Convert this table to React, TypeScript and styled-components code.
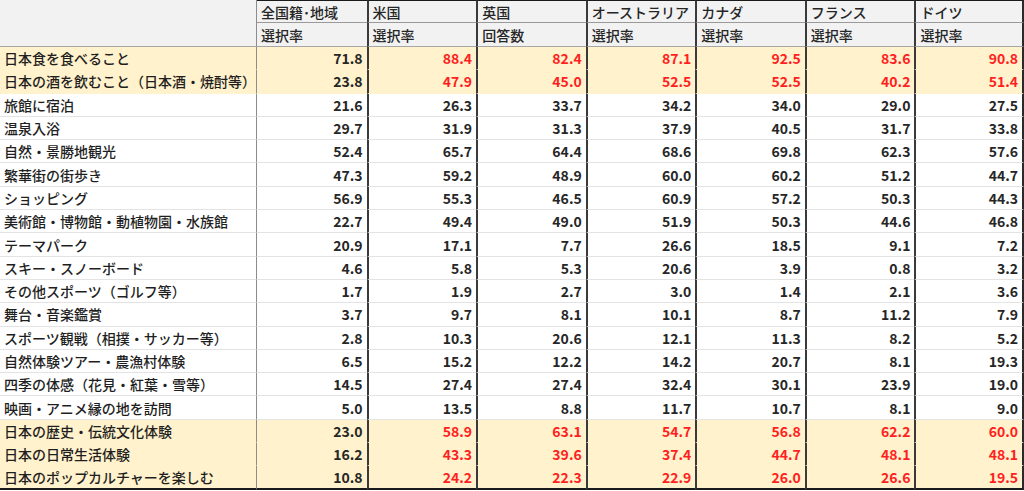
import React from "react";
import styled, { createGlobalStyle, css } from "styled-components";

const GlobalStyle = createGlobalStyle`
  html, body {
    margin: 0;
    padding: 0;
    background: #ffffff;
  }
  body {
    font-family: "Noto Sans CJK JP", "Noto Sans", sans-serif;
    color: #1f1f1f;
  }
`;

const ROW_H = "23.3px";

const Sheet = styled.div`
  display: grid;
  grid-template-columns: 257px repeat(7, 1fr);
  grid-template-rows: 23px 24px repeat(19, ${ROW_H});
  width: 1024px;
  height: 491px;
  box-sizing: border-box;
  overflow: hidden;
  font-size: 14px;
  line-height: 1;
`;

const Corner = styled.div`
  grid-row: 1 / span 2;
  grid-column: 1;
  background: #f2f2f2;
  border-bottom: 1px solid #a6a6a6;
  border-right: 1px solid #8c8c8c;
`;

interface ColProps {
  $first?: boolean;
  $last?: boolean;
}

const colEdges = css<ColProps>`
  border-left: ${(p) => (p.$first ? "none" : "2px solid #3a3a3a")};
  border-right: ${(p) => (p.$last ? "2px solid #2a2a2a" : "none")};
`;

const HeadCell = styled.div<ColProps & { $top?: boolean }>`
  display: flex;
  align-items: center;
  padding: 0 4px;
  background: #f2f2f2;
  color: #262626;
  font-weight: 500;
  white-space: nowrap;
  overflow: hidden;
  box-sizing: border-box;
  border-top: ${(p) => (p.$top ? "1px solid #1a1a1a" : "none")};
  border-bottom: 1px solid ${(p) => (p.$top ? "#9a9a9a" : "#a6a6a6")};
  ${colEdges}
`;

interface RowProps {
  $hl?: boolean;
  $lastRow?: boolean;
}

const rowLine = css<RowProps>`
  background: ${(p) => (p.$hl ? "#fff2cc" : "#ffffff")};
  border-bottom: ${(p) =>
    p.$lastRow ? "2px solid #1a1a1a" : `1px solid ${p.$hl ? "#fff2cc" : "#e3e3e3"}`};
`;

const LabelCell = styled.div<RowProps>`
  display: flex;
  align-items: center;
  padding: 0 4px;
  white-space: nowrap;
  overflow: hidden;
  box-sizing: border-box;
  font-weight: 500;
  color: #1f1f1f;
  border-right: 1px solid #8c8c8c;
  ${rowLine}
`;

const NumCell = styled.div<RowProps & ColProps & { $red?: boolean }>`
  display: flex;
  align-items: center;
  justify-content: flex-end;
  padding: 0 4px;
  box-sizing: border-box;
  font-weight: 700;
  color: ${(p) => (p.$red ? "#ff1f1f" : "#262626")};
  ${rowLine}
  ${colEdges}
`;

const countries = [
  { name: "全国籍･地域", metric: "選択率" },
  { name: "米国", metric: "選択率" },
  { name: "英国", metric: "回答数" },
  { name: "オーストラリア", metric: "選択率" },
  { name: "カナダ", metric: "選択率" },
  { name: "フランス", metric: "選択率" },
  { name: "ドイツ", metric: "選択率" },
];

const rows: { label: string; values: string[]; hl?: boolean }[] = [
  { label: "日本食を食べること", values: ["71.8", "88.4", "82.4", "87.1", "92.5", "83.6", "90.8"], hl: true },
  { label: "日本の酒を飲むこと（日本酒・焼酎等）", values: ["23.8", "47.9", "45.0", "52.5", "52.5", "40.2", "51.4"], hl: true },
  { label: "旅館に宿泊", values: ["21.6", "26.3", "33.7", "34.2", "34.0", "29.0", "27.5"] },
  { label: "温泉入浴", values: ["29.7", "31.9", "31.3", "37.9", "40.5", "31.7", "33.8"] },
  { label: "自然・景勝地観光", values: ["52.4", "65.7", "64.4", "68.6", "69.8", "62.3", "57.6"] },
  { label: "繁華街の街歩き", values: ["47.3", "59.2", "48.9", "60.0", "60.2", "51.2", "44.7"] },
  { label: "ショッピング", values: ["56.9", "55.3", "46.5", "60.9", "57.2", "50.3", "44.3"] },
  { label: "美術館・博物館・動植物園・水族館", values: ["22.7", "49.4", "49.0", "51.9", "50.3", "44.6", "46.8"] },
  { label: "テーマパーク", values: ["20.9", "17.1", "7.7", "26.6", "18.5", "9.1", "7.2"] },
  { label: "スキー・スノーボード", values: ["4.6", "5.8", "5.3", "20.6", "3.9", "0.8", "3.2"] },
  { label: "その他スポーツ（ゴルフ等）", values: ["1.7", "1.9", "2.7", "3.0", "1.4", "2.1", "3.6"] },
  { label: "舞台・音楽鑑賞", values: ["3.7", "9.7", "8.1", "10.1", "8.7", "11.2", "7.9"] },
  { label: "スポーツ観戦（相撲・サッカー等）", values: ["2.8", "10.3", "20.6", "12.1", "11.3", "8.2", "5.2"] },
  { label: "自然体験ツアー・農漁村体験", values: ["6.5", "15.2", "12.2", "14.2", "20.7", "8.1", "19.3"] },
  { label: "四季の体感（花見・紅葉・雪等）", values: ["14.5", "27.4", "27.4", "32.4", "30.1", "23.9", "19.0"] },
  { label: "映画・アニメ縁の地を訪問", values: ["5.0", "13.5", "8.8", "11.7", "10.7", "8.1", "9.0"] },
  { label: "日本の歴史・伝統文化体験", values: ["23.0", "58.9", "63.1", "54.7", "56.8", "62.2", "60.0"], hl: true },
  { label: "日本の日常生活体験", values: ["16.2", "43.3", "39.6", "37.4", "44.7", "48.1", "48.1"], hl: true },
  { label: "日本のポップカルチャーを楽しむ", values: ["10.8", "24.2", "22.3", "22.9", "26.0", "26.6", "19.5"], hl: true },
];

export default function App() {
  const last = countries.length - 1;
  return (
    <>
      <GlobalStyle />
      <Sheet>
        <Corner />
        {countries.map((c, i) => (
          <HeadCell key={"n" + i} $top $first={i === 0} $last={i === last}>
            {c.name}
          </HeadCell>
        ))}
        {countries.map((c, i) => (
          <HeadCell key={"m" + i} $first={i === 0} $last={i === last}>
            {c.metric}
          </HeadCell>
        ))}
        {rows.map((r, ri) => {
          const lastRow = ri === rows.length - 1;
          return (
            <React.Fragment key={r.label}>
              <LabelCell $hl={r.hl} $lastRow={lastRow}>
                {r.label}
              </LabelCell>
              {r.values.map((v, i) => (
                <NumCell
                  key={i}
                  $hl={r.hl}
                  $lastRow={lastRow}
                  $first={i === 0}
                  $last={i === last}
                  $red={r.hl && i > 0}
                >
                  {v}
                </NumCell>
              ))}
            </React.Fragment>
          );
        })}
      </Sheet>
    </>
  );
}
